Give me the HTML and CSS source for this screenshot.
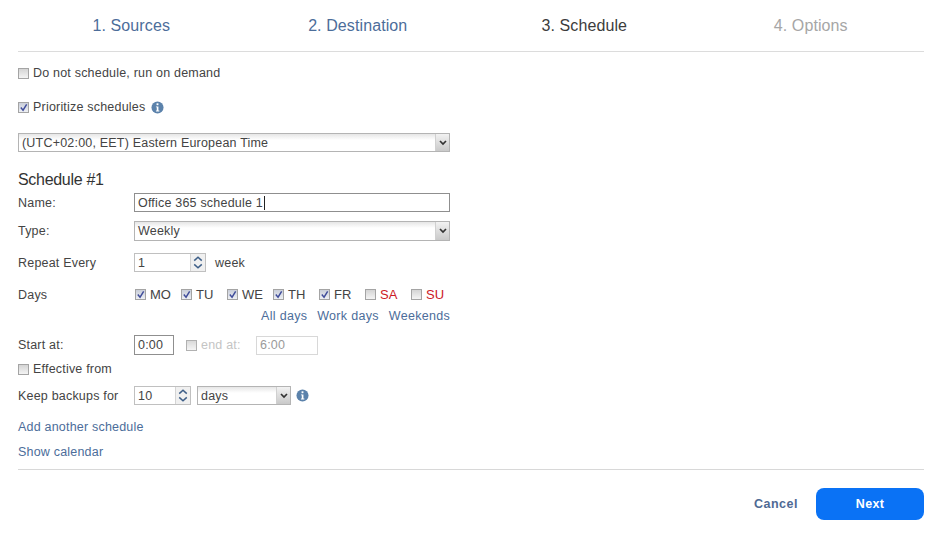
FILE: index.html
```html
<!DOCTYPE html>
<html lang="en">
<head>
    <meta charset="UTF-8">
    <title>Schedule</title>
    <link rel="stylesheet" href="styles.css">
</head>
<body>
    <div class="wizard">
        <div class="steps">
            <a class="step">1. Sources</a>
            <a class="step">2. Destination</a>
            <span class="step current">3. Schedule</span>
            <span class="step disabled">4. Options</span>
        </div>

        <div class="check-line first-check">
            <span class="box"></span>Do not schedule, run on demand
        </div>
        <div class="check-line second-check">
            <span class="box checked"><svg viewBox="0 0 10 10"><path d="M2 5l2.500 3L8.500 1.500" /></svg></span>Prioritize schedules
            <svg class="info prioritize-info" viewBox="0 0 14 14"><circle cx="7" cy="7" r="6.500" fill="#5b82ab" /><rect x="6" y="2.500" width="2" height="2" fill="#fff" /><path d="M5.300 5.800H8V10.300H9V11.300H5.300V10.300H6.200V6.800H5.300Z" fill="#fff" /></svg>
        </div>

        <div class="field select tz">
            <span class="value">(UTC+02:00, EET) Eastern European Time</span>
            <span class="arrow"><svg viewBox="0 0 10 6"><path d="M2 1l3 3 3-3" /></svg></span>
        </div>

        <h2>Schedule #1</h2>

        <div class="row name-row">
            <label>Name:</label>
            <div class="field grow dark"><span class="value">Office 365 schedule 1<span class="caret"></span></span></div>
        </div>
        <div class="row type-row">
            <label>Type:</label>
            <div class="field select grow">
                <span class="value">Weekly</span>
                <span class="arrow"><svg viewBox="0 0 10 6"><path d="M2 1l3 3 3-3" /></svg></span>
            </div>
        </div>
        <div class="row repeat-row">
            <label>Repeat Every</label>
            <div class="field spinner repeat">
                <span class="value">1</span>
                <span class="spin"><svg viewBox="0 0 14 18"><path d="M3 7l4-3.500L11 7M3 11l4 3.500L11 11" /></svg></span>
            </div>
            <span class="unit">week</span>
        </div>
        <div class="row days-row">
            <label>Days</label>
            <div class="days">
                <div class="day"><span class="box checked"><svg viewBox="0 0 10 10"><path d="M2 5l2.500 3L8.500 1.500" /></svg></span>MO</div>
                <div class="day"><span class="box checked"><svg viewBox="0 0 10 10"><path d="M2 5l2.500 3L8.500 1.500" /></svg></span>TU</div>
                <div class="day"><span class="box checked"><svg viewBox="0 0 10 10"><path d="M2 5l2.500 3L8.500 1.500" /></svg></span>WE</div>
                <div class="day"><span class="box checked"><svg viewBox="0 0 10 10"><path d="M2 5l2.500 3L8.500 1.500" /></svg></span>TH</div>
                <div class="day"><span class="box checked"><svg viewBox="0 0 10 10"><path d="M2 5l2.500 3L8.500 1.500" /></svg></span>FR</div>
                <div class="day weekend"><span class="box"></span>SA</div>
                <div class="day weekend"><span class="box"></span>SU</div>
            </div>
        </div>
        <div class="day-links">
            <a>All days</a>
            <a>Work days</a>
            <a>Weekends</a>
        </div>
        <div class="row start-row">
            <label>Start at:</label>
            <div class="field time dark"><span class="value">0:00</span></div>
            <span class="box end-box"></span>
            <span class="end-label">end at:</span>
            <div class="field end-time"><span class="value">6:00</span></div>
        </div>
        <div class="check-line effective">
            <span class="box"></span>Effective from
        </div>
        <div class="row keep-row">
            <label>Keep backups for</label>
            <div class="field spinner keep">
                <span class="value">10</span>
                <span class="spin"><svg viewBox="0 0 14 18"><path d="M3 7l4-3.500L11 7M3 11l4 3.500L11 11" /></svg></span>
            </div>
            <div class="field select period">
                <span class="value">days</span>
                <span class="arrow"><svg viewBox="0 0 10 6"><path d="M2 1l3 3 3-3" /></svg></span>
            </div>
            <svg class="info" viewBox="0 0 14 14"><circle cx="7" cy="7" r="6.500" fill="#5b82ab" /><rect x="6" y="2.500" width="2" height="2" fill="#fff" /><path d="M5.300 5.800H8V10.300H9V11.300H5.300V10.300H6.200V6.800H5.300Z" fill="#fff" /></svg>
        </div>

        <a class="link add-link">Add another schedule</a>
        <a class="link calendar-link">Show calendar</a>

        <div class="footer">
            <a class="cancel">Cancel</a>
            <button class="next">Next</button>
        </div>
    </div>
</body>
</html>
```
FILE: styles.css
```css
* {
    box-sizing: border-box;
}
body {
    margin: 0;
    background: #fff;
    color: #444;
    font-family: "Liberation Sans", Arial, sans-serif;
    font-size: 12.5px;
    letter-spacing: 0.2px;
}
a {
    color: #4c6d9a;
}
.wizard {
    width: 942px;
    height: 538px;
    padding: 0 18px;
}
.steps {
    display: grid;
    grid-template-columns: repeat(4, 1fr);
    height: 52px;
    padding-bottom: 1px;
    border-bottom: 1px solid #dcdcdc;
    font-size: 16px;
    letter-spacing: 0.1px;
    line-height: 52px;
    text-align: center;
}
.step {
    color: #4c6d9a;
}
.current {
    color: #3c3c3c;
}
.disabled {
    color: #a6a6a6;
}
.check-line {
    display: flex;
    align-items: center;
    height: 14px;
}
.first-check {
    margin-top: 14px;
}
.second-check {
    margin-top: 20px;
}
.box {
    flex: none;
    display: inline-block;
    width: 11px;
    height: 11px;
    margin-right: 4px;
    border: 1px solid #a4a4a4;
    background: linear-gradient(#d4d4d4, #f4f4f4);
}
.box.checked {
    background: linear-gradient(#c9ced9, #eef0f4);
}
.box svg {
    display: block;
    width: 9px;
    height: 9px;
}
.box path {
    fill: none;
    stroke: #3f4c9a;
    stroke-width: 1.6;
}
.info {
    flex: none;
    width: 13px;
    height: 13px;
    margin-left: 5px;
}
.prioritize-info {
    margin-left: 6px;
}
.field {
    display: flex;
    align-items: center;
    height: 19px;
    border: 1px solid #ababab;
    background: #fff;
}
.value {
    flex: 1;
    padding-left: 3px;
    white-space: nowrap;
}
.select {
    border-color: #b4b4b4;
    background: linear-gradient(#e6e6e6, #fff 6px);
}
.arrow {
    flex: none;
    display: flex;
    align-items: center;
    justify-content: center;
    width: 14px;
    height: 100%;
    border-left: 1px solid #d0d0d0;
    background: linear-gradient(#f2f2f2, #c9c9c9);
}
.arrow svg {
    width: 10px;
    height: 6px;
}
.arrow path {
    fill: none;
    stroke: #333;
    stroke-width: 1.7;
}
.tz {
    width: 432px;
    margin-top: 19px;
}
h2 {
    margin: 19px 0 0;
    height: 18px;
    color: #333;
    font-size: 16px;
    font-weight: normal;
    letter-spacing: -0.3px;
    line-height: 18px;
}
.row {
    display: flex;
    align-items: center;
}
.row label {
    flex: none;
    width: 116px;
}
.grow {
    flex: none;
    width: 316px;
}
.dark {
    border-color: #8f8f8f;
}
.caret {
    display: inline-block;
    width: 1px;
    height: 14px;
    margin-left: 1px;
    background: #222;
    vertical-align: -3px;
}
.name-row {
    margin-top: 4px;
}
.type-row {
    margin-top: 9px;
}
.type-row .field {
    height: 20px;
}
.repeat-row {
    margin-top: 12px;
}
.spinner {
    border-color: #c0c0c0;
}
.spin {
    flex: none;
    display: flex;
    width: 15px;
    height: 100%;
    border-left: 1px solid #d4d4d4;
    background: #f0f0f0;
}
.spin svg {
    width: 14px;
    height: 100%;
}
.spin path {
    fill: none;
    stroke: #3e5f88;
    stroke-width: 1.6;
}
.repeat {
    width: 72px;
}
.unit {
    margin-left: 9px;
}
.days-row {
    margin-top: 15px;
    height: 14px;
}
.row.days-row label {
    position: relative;
    top: 1px;
}
.days {
    display: flex;
    padding-left: 1px;
}
.day {
    display: flex;
    align-items: center;
    width: 46px;
    font-size: 13px;
    letter-spacing: 0;
}
.weekend {
    color: #cc1a26;
}
.day-links {
    display: flex;
    justify-content: flex-end;
    gap: 10px;
    width: 432px;
    margin-top: 8px;
    height: 14px;
    letter-spacing: 0.3px;
    line-height: 14px;
}
.start-row {
    margin-top: 12px;
}
.time {
    width: 40px;
    height: 20px;
}
.end-box {
    margin-left: 12px;
    margin-right: 4px;
    opacity: 0.85;
}
.end-label {
    width: 55px;
    color: #c4c4c4;
}
.end-time {
    width: 62px;
    border-color: #d8d8d8;
    color: #9a9a9a;
}
.effective {
    margin-top: 7px;
}
.keep-row {
    margin-top: 10px;
}
.keep {
    width: 57px;
}
.keep .spin {
    width: 15px;
}
.period {
    width: 94px;
    margin-left: 6px;
}
.link {
    display: block;
    height: 14px;
    line-height: 14px;
}
.add-link {
    margin-top: 15px;
}
.calendar-link {
    margin-top: 11px;
}
.footer {
    display: flex;
    align-items: center;
    justify-content: flex-end;
    margin-top: 10px;
    padding-top: 18px;
    border-top: 1px solid #d8d8d8;
}
.cancel {
    margin-right: 18px;
    color: #4f6a94;
    font-weight: bold;
    letter-spacing: 0.5px;
}
.next {
    width: 108px;
    height: 32px;
    border: 0;
    border-radius: 8px;
    background: #0a72f5;
    color: #fff;
    font-family: inherit;
    font-size: 12.5px;
    font-weight: bold;
    letter-spacing: 0.3px;
}
```
